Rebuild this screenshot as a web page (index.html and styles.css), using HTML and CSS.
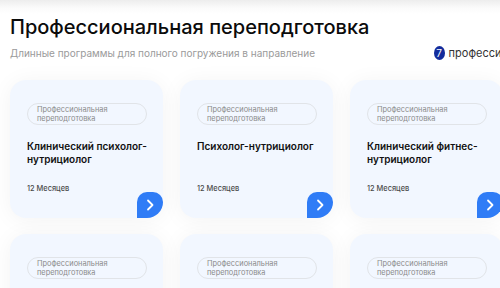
FILE: index.html
```html
<!DOCTYPE html>
<html lang="ru">
<head>
<meta charset="utf-8">
<link rel="stylesheet" href="styles.css">
</head>
<body>
<div class="page">
  <header class="head">
    <h1 class="title">Профессиональная переподготовка</h1>
    <div class="sub-row">
      <p class="subtitle">Длинные программы для полного погружения в направление</p>
      <div class="count"><span class="badge">7</span><span class="count-text">профессий</span></div>
    </div>
  </header>
  <div class="grid">
    <div class="card">
      <div class="pill">Профессиональная<br>переподготовка</div>
      <div class="name">Клинический психолог-<br>нутрициолог</div>
      <div class="foot"><span class="months">12 Месяцев</span><span class="go"><svg viewBox="0 0 26 26" width="26" height="26"><path d="M11 8.5 L15.5 13 L11 17.5" fill="none" stroke="#fff" stroke-width="1.8" stroke-linecap="round" stroke-linejoin="round"/></svg></span></div>
    </div>
    <div class="card">
      <div class="pill">Профессиональная<br>переподготовка</div>
      <div class="name">Психолог-нутрициолог</div>
      <div class="foot"><span class="months">12 Месяцев</span><span class="go"><svg viewBox="0 0 26 26" width="26" height="26"><path d="M11 8.5 L15.5 13 L11 17.5" fill="none" stroke="#fff" stroke-width="1.8" stroke-linecap="round" stroke-linejoin="round"/></svg></span></div>
    </div>
    <div class="card">
      <div class="pill">Профессиональная<br>переподготовка</div>
      <div class="name">Клинический фитнес-<br>нутрициолог</div>
      <div class="foot"><span class="months">12 Месяцев</span><span class="go"><svg viewBox="0 0 26 26" width="26" height="26"><path d="M11 8.5 L15.5 13 L11 17.5" fill="none" stroke="#fff" stroke-width="1.8" stroke-linecap="round" stroke-linejoin="round"/></svg></span></div>
    </div>
    <div class="card">
      <div class="pill">Профессиональная<br>переподготовка</div>
      <div class="name">Клинический нутрициолог</div>
      <div class="foot"><span class="months">12 Месяцев</span><span class="go"></span></div>
    </div>
    <div class="card">
      <div class="pill">Профессиональная<br>переподготовка</div>
      <div class="name">Нутрициолог</div>
      <div class="foot"><span class="months">12 Месяцев</span><span class="go"></span></div>
    </div>
    <div class="card">
      <div class="pill">Профессиональная<br>переподготовка</div>
      <div class="name">Фитнес-нутрициолог</div>
      <div class="foot"><span class="months">12 Месяцев</span><span class="go"></span></div>
    </div>
  </div>
</div>
</body>
</html>
```
FILE: styles.css
```css
html, body {
  margin: 0;
  padding: 0;
}
body {
  width: 500px;
  height: 288px;
  overflow: hidden;
  background: linear-gradient(#ededed 0px, #fbfbfb 8px, #ffffff 14px);
  font-family: "Inter", "Open Sans", sans-serif;
  color: #111;
}
.page {
  width: 493px;
  padding: 14px 0 0 10px;
}
.head {
  display: flex;
  flex-direction: column;
}
.title {
  margin: 0;
  font-size: 20px;
  line-height: 26px;
  font-weight: 500;
  color: #0b0b0b;
}
.sub-row {
  display: flex;
  justify-content: space-between;
  align-items: center;
  margin-top: 5px;
  height: 16px;
}
.subtitle {
  margin: 0;
  font-size: 10px;
  color: #9a9a9a;
}
.count {
  display: flex;
  align-items: center;
  gap: 4px;
  white-space: nowrap;
  margin-right: -5px;
}
.badge {
  width: 11px;
  height: 14px;
  border-radius: 50%;
  background: #132c9c;
  color: #fff;
  font-size: 10px;
  line-height: 14px;
  text-align: center;
}
.count-text {
  font-size: 11px;
  color: #333;
}
.grid {
  display: grid;
  grid-template-columns: repeat(3, 153px);
  grid-auto-rows: 138px;
  column-gap: 17px;
  row-gap: 16px;
  margin-top: 19px;
}
.card {
  display: flex;
  flex-direction: column;
  background: #f2f7ff;
  border-radius: 16px;
  padding: 23px 0 0 17px;
  box-shadow: 0 2px 22px rgba(0, 0, 0, 0.05);
  overflow: hidden;
}
.pill {
  width: 100px;
  padding: 1px 9px;
  border: 1px solid #e1e4e8;
  border-radius: 12px;
  font-size: 7.4px;
  line-height: 9px;
  color: #8a8a8a;
}
.name {
  margin-top: 15px;
  font-size: 10px;
  line-height: 13px;
  font-weight: 600;
  color: #111;
}
.foot {
  margin-top: auto;
  display: flex;
  justify-content: space-between;
  align-items: flex-end;
}
.months {
  font-size: 7.4px;
  line-height: 10px;
  font-weight: 500;
  color: #4a4a4a;
  padding-bottom: 24px;
}
.go {
  width: 26px;
  height: 26px;
  background: #2f7cf6;
  border-radius: 10px 10px 0 0;
  display: flex;
}
```
